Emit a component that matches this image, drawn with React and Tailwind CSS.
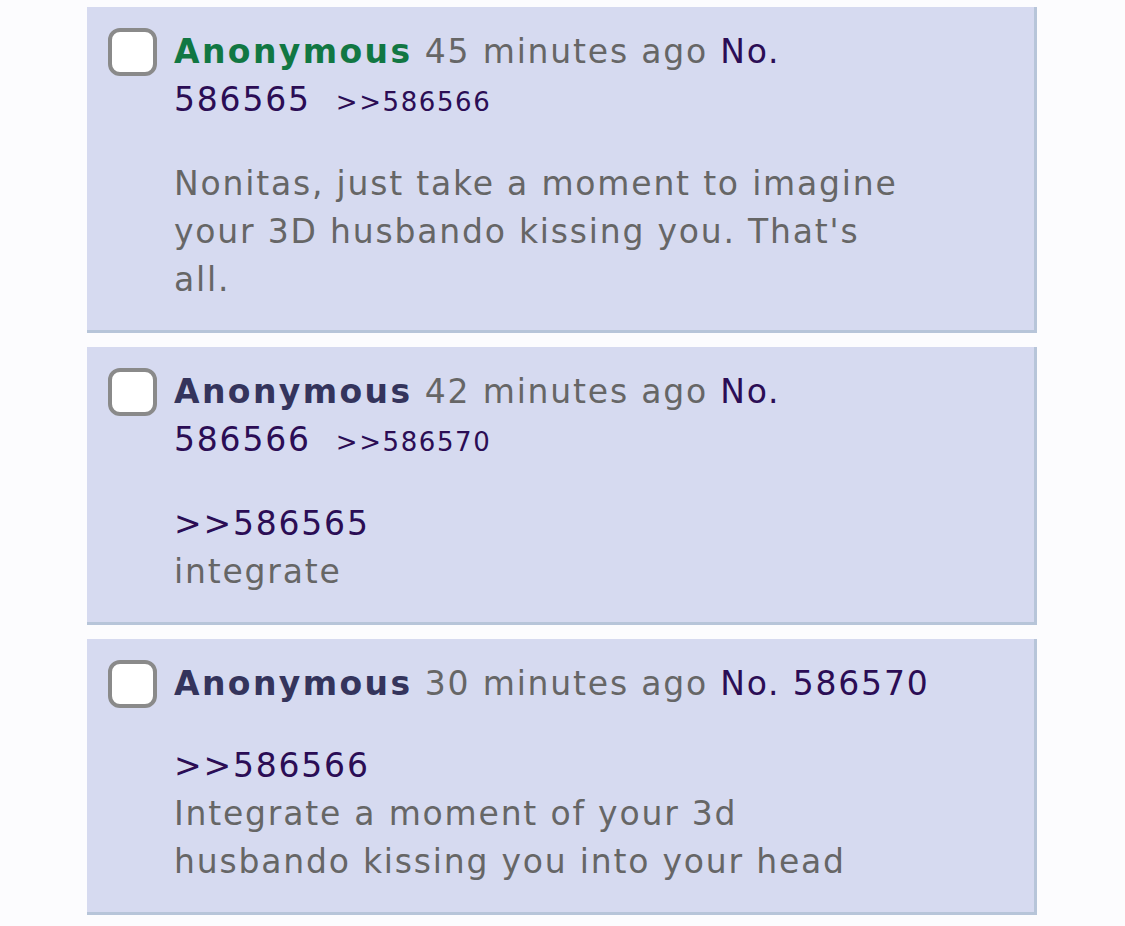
import React from 'react';

const posts = [
  {
    name: 'Anonymous',
    green: true,
    time: '45 minutes ago',
    no: '586565',
    backlink: '>>586566',
    quote: null,
    lines: ['Nonitas, just take a moment to imagine', "your 3D husbando kissing you. That's", 'all.'],
  },
  {
    name: 'Anonymous',
    time: '42 minutes ago',
    no: '586566',
    backlink: '>>586570',
    quote: '>>586565',
    lines: ['integrate'],
  },
  {
    name: 'Anonymous',
    time: '30 minutes ago',
    no: '586570',
    backlink: null,
    quote: '>>586566',
    lines: ['Integrate a moment of your 3d', 'husbando kissing you into your head'],
  },
];

function Post({ post }) {
  return (
    <div className="w-[950px] bg-[#d6daf0] border-r-[3px] border-b-[3px] border-[#b7c5d9] pl-[21px] pt-[21px] pb-[26px] flex gap-[17px]">
      {/* checkbox */}
      <div className="w-[49px] h-[48px] shrink-0 rounded-[12px] border-[4px] border-[#8a8a8a] bg-white" />
      <div className="flex-1 text-[33px] leading-[48px] tracking-[1.8px] text-[#666666]">
        <div>
          <span className={`font-bold tracking-[2.4px] ${post.green ? 'text-[#117743]' : 'text-[#34345c]'}`}>{post.name}</span>{' '}
          <span>{post.time}</span>{' '}
          <span className="text-[#2b0d55]">No.</span>
          {post.backlink ? <br /> : ' '}
          <span className="text-[#2b0d55]">{post.no}</span>
          {post.backlink && (
            <span className="text-[#2b0d55] text-[26px] tracking-[1.6px] ml-[25px]">{post.backlink}</span>
          )}
        </div>
        <div className="mt-[34px]">
          {post.quote && <div className="text-[#2b0d55]">{post.quote}</div>}
          {post.lines.map((l, i) => (
            <div key={i}>{l}</div>
          ))}
        </div>
      </div>
    </div>
  );
}

export default function App() {
  return (
    <div className="min-h-screen bg-[#fcfcfe] pt-[7px] pl-[87px] flex flex-col gap-[14px] font-['DejaVu_Sans',sans-serif]">
      {posts.map((p, i) => (
        <Post key={i} post={p} />
      ))}
    </div>
  );
}
